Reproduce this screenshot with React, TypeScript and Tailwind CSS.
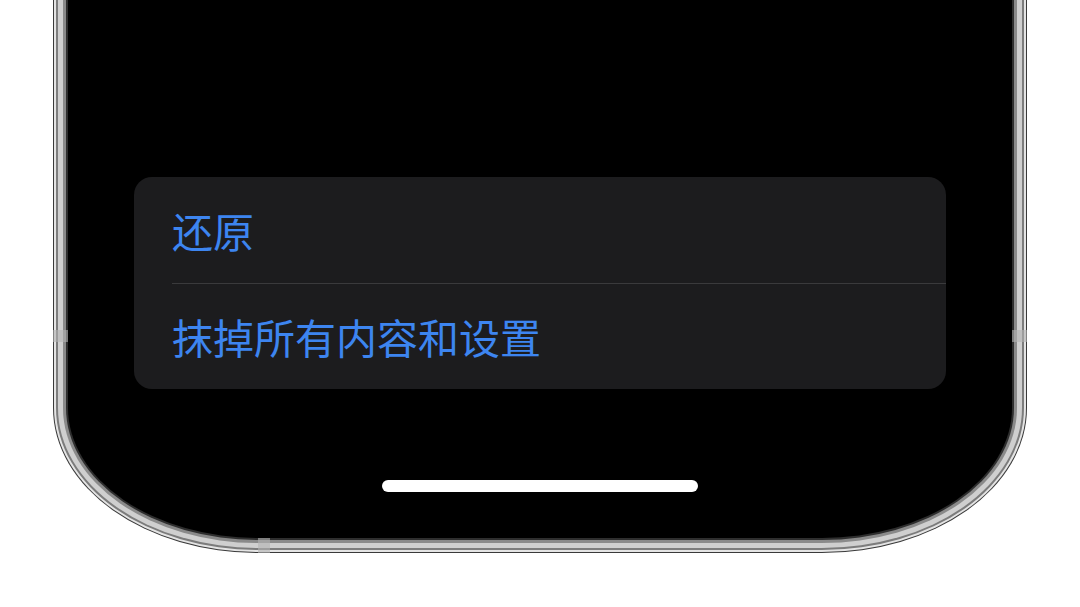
const rows = ['还原', '抹掉所有内容和设置'];

function SettingsCard() {
  return (
    <div className="rounded-[18px] bg-[#1c1c1e]">
      {rows.map((label, i) => (
        <div key={label} className="flex h-[106px] flex-col">
          {i > 0 && <div className="ml-[38px] h-px bg-[#3a3a3c]" />}
          <div className="flex flex-1 items-center pl-[38px] text-[41px] leading-none text-[#3d85f0]">
            {label}
          </div>
        </div>
      ))}
    </div>
  );
}

export default function App() {
  return (
    <div
      className="relative h-[607px] w-[1080px] overflow-hidden bg-white"
      style={{ fontFamily: '"Noto Sans CJK SC", "Noto Sans", sans-serif' }}
    >
      {/* steel band, built from nested strips */}
      <div className="relative ml-[53px] h-[553px] w-[974px]">
        <div className="h-full rounded-b-[205px_145px] bg-[#3a3a3a] px-[1px] pb-[1px]">
          <div className="h-full rounded-b-[204px_144px] bg-[#e4e4e4] px-[2px] pb-[2px]">
            <div className="h-full rounded-b-[202px_142px] bg-[#7c7c7c] px-[2px] pb-[2px]">
              <div className="h-full rounded-b-[200px_140px] bg-[#cfcfcf] px-[5px] pb-[5px]">
                <div className="h-full rounded-b-[195px_135px] bg-[#8a8a8a] px-[3px] pb-[3px]">
                  <div className="h-full rounded-b-[192px_132px] bg-[#2e2e2e] px-[2px] pb-[2px]">
                    {/* screen */}
                    <div className="flex h-full flex-col rounded-b-[190px_130px] bg-black px-[66px] pt-[177px]">
                      <SettingsCard />
                      <div className="mt-[91px] flex justify-center">
                        <div className="h-[12px] w-[316px] rounded-full bg-white" />
                      </div>
                    </div>
                  </div>
                </div>
              </div>
            </div>
          </div>
        </div>

        {/* antenna lines */}
        <div className="absolute left-0 top-[330px] h-[12px] w-[15px] bg-[#b4b4b4]/60" />
        <div className="absolute right-0 top-[330px] h-[12px] w-[15px] bg-[#b4b4b4]/60" />
        <div className="absolute bottom-0 left-[205px] h-[15px] w-[12px] bg-[#b4b4b4]/60" />
      </div>
    </div>
  );
}
